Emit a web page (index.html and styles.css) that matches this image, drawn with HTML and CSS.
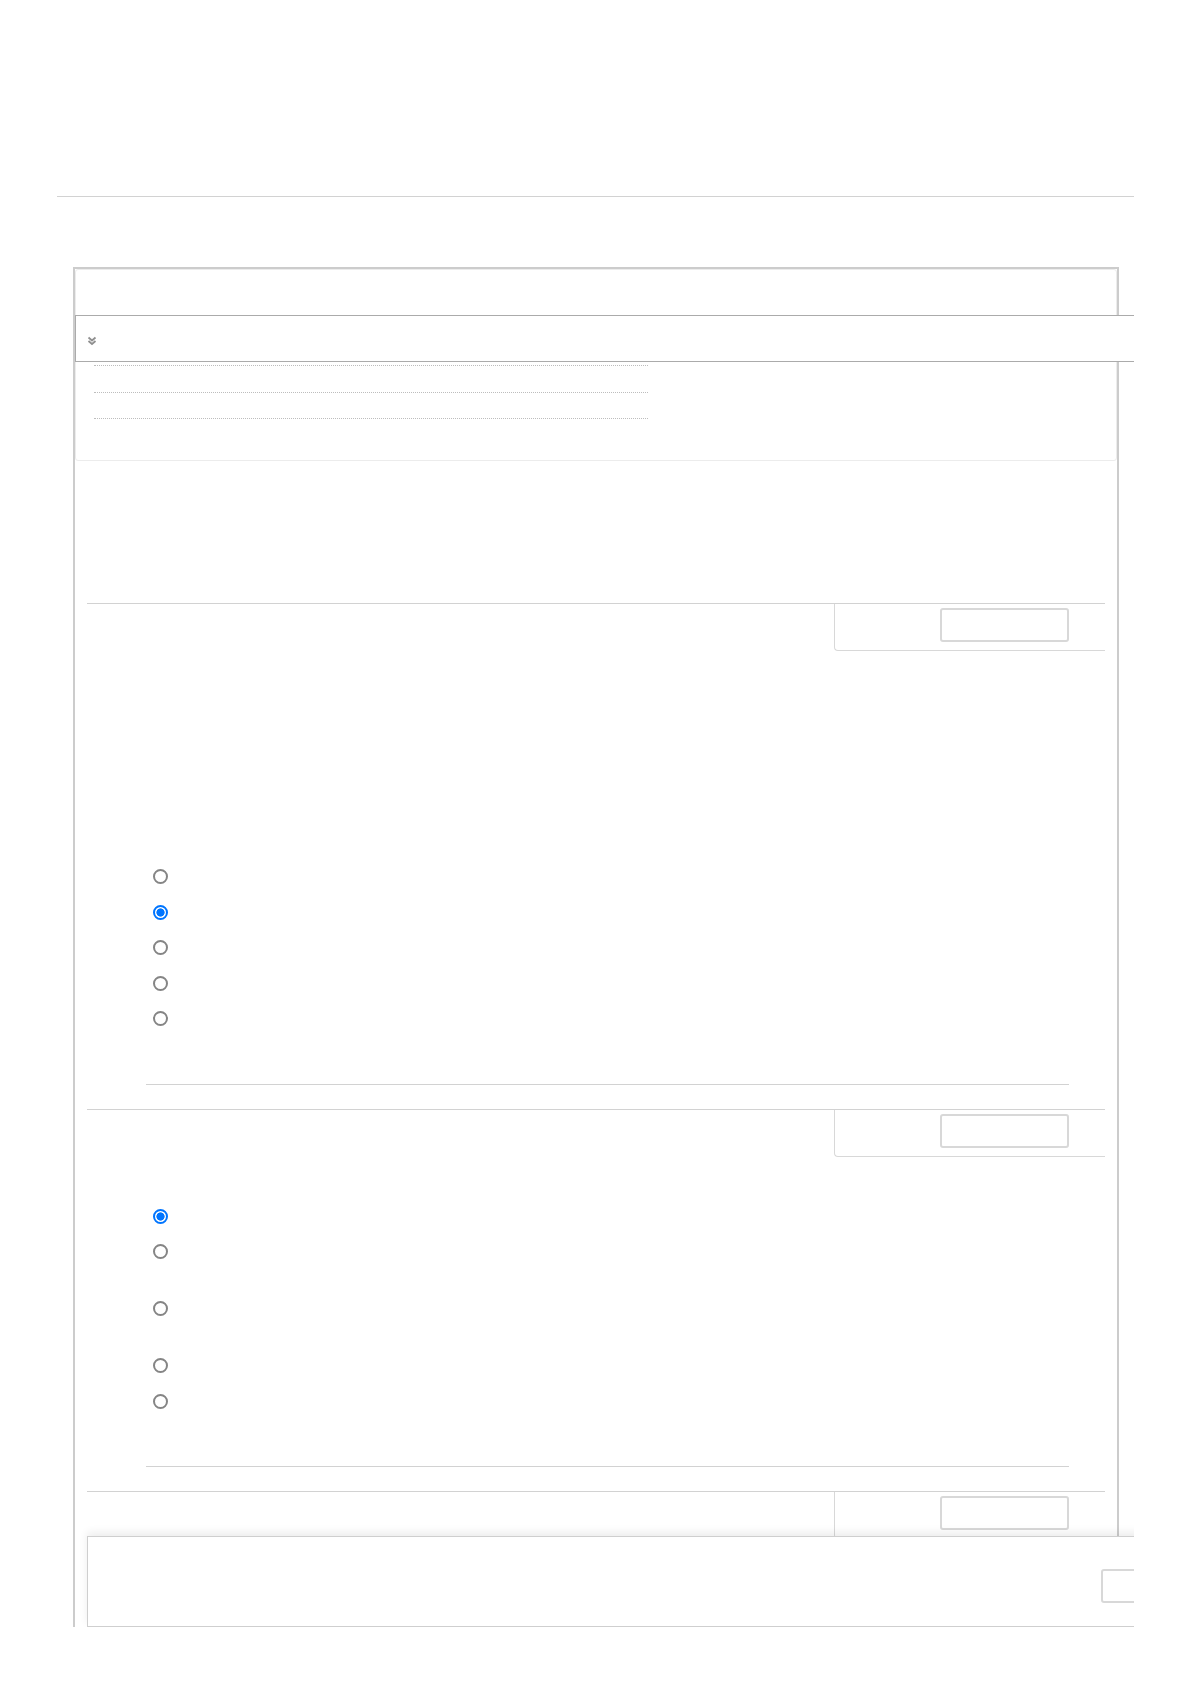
FILE: index.html
```html
<!DOCTYPE html>
<html lang="en">
<head>
<meta charset="utf-8">
<title>Quiz</title>
<link rel="stylesheet" href="styles.css">
</head>
<body>
<div class="page">
  <div class="masthead"></div>
  <div class="rule"></div>

  <div class="frame">
    <div class="panel">
      <div class="panel-top"></div>
      <div class="toggle-bar">
        <svg class="chev" width="10" height="10" viewBox="0 0 10 10" aria-hidden="true">
          <polyline points="1.5,1.5 5,4.5 8.5,1.5" fill="none" stroke="#8f8f8f" stroke-width="1.8"/>
          <polyline points="1.5,5 5,8 8.5,5" fill="none" stroke="#8f8f8f" stroke-width="1.8"/>
        </svg>
      </div>
      <ul class="index">
        <li></li>
        <li></li>
        <li></li>
      </ul>
    </div>

    <div class="quiz">
      <section class="question">
        <div class="q-head">
          <div class="q-info"><span class="q-btn"></span></div>
        </div>
        <div class="q-body q-body-tall"></div>
        <div class="options">
          <label class="opt"><input type="radio" name="q1"></label>
          <label class="opt"><input type="radio" name="q1" checked></label>
          <label class="opt"><input type="radio" name="q1"></label>
          <label class="opt"><input type="radio" name="q1"></label>
          <label class="opt"><input type="radio" name="q1"></label>
        </div>
        <div class="q-sep"></div>
      </section>

      <section class="question">
        <div class="q-head">
          <div class="q-info"><span class="q-btn"></span></div>
        </div>
        <div class="q-body"></div>
        <div class="options">
          <label class="opt"><input type="radio" name="q2" checked></label>
          <label class="opt tall"><input type="radio" name="q2"></label>
          <label class="opt tall"><input type="radio" name="q2"></label>
          <label class="opt"><input type="radio" name="q2"></label>
          <label class="opt"><input type="radio" name="q2"></label>
        </div>
        <div class="q-sep"></div>
      </section>

      <section class="question">
        <div class="q-head">
          <div class="q-info"><span class="q-btn"></span></div>
        </div>
        <div class="q-body"></div>
      </section>
    </div>
  </div>

  <div class="footer-bar">
    <span class="footer-btn"></span>
  </div>
</div>
</body>
</html>
```

FILE: styles.css
```css
html, body {
  margin: 0;
  padding: 0;
  background: #ffffff;
  font-family: "Liberation Sans", Arial, sans-serif;
  color: #222;
}

.page {
  position: relative;
  margin-left: 57px;
  width: 1077px;
  height: 1627px;
  overflow: hidden;
}

.masthead {
  height: 196px;
}

.rule {
  height: 1px;
  background: #d2d2d2;
}

.frame {
  margin-top: 70px;
  margin-left: 16px;
  width: 1042px;
  height: 1400px;
  border: 2px solid #cccccc;
  border-bottom: none;
}

.panel {
  box-sizing: border-box;
  height: 192px;
  border: 1px solid #ececec;
  border-radius: 3px;
}

.panel-top {
  height: 45px;
}

.toggle-bar {
  box-sizing: border-box;
  margin-left: -1px;
  width: 1075px;
  height: 47px;
  border: 1px solid #ababab;
  background: #ffffff;
  display: flex;
  align-items: center;
  padding-left: 11px;
  padding-top: 5px;
}

.chev {
  display: block;
}

.index {
  list-style: none;
  margin: 3px 0 0 18px;
  padding: 0;
  width: 554px;
}

.index li {
  height: 26.5px;
  border-top: 1px dotted #bdbdbd;
  box-sizing: border-box;
}

.quiz {
  margin-top: 142px;
  padding: 0 12px;
}

.q-head {
  border-top: 1px solid #d2d2d2;
  display: flex;
  justify-content: flex-end;
}

.q-info {
  box-sizing: border-box;
  width: 271px;
  height: 47px;
  border-left: 1px solid #d8d8d8;
  border-bottom: 1px solid #d8d8d8;
  border-bottom-left-radius: 4px;
  padding: 4px 0 0 105px;
}

.q-btn {
  display: block;
  box-sizing: border-box;
  width: 129px;
  height: 34px;
  border: 2px solid #d8d8d8;
  border-radius: 3px;
  background: #ffffff;
}

.q-body {
  height: 41px;
}

.q-body-tall {
  height: 207px;
}

.options {
  display: flex;
  flex-direction: column;
  padding-left: 66px;
}

.opt {
  display: flex;
  align-items: flex-start;
  height: 35.5px;
}

.opt.tall {
  height: 57px;
}

.opt input {
  appearance: none;
  -webkit-appearance: none;
  box-sizing: border-box;
  width: 15px;
  height: 15px;
  margin: 11px 0 0 0;
  border: 2px solid #858585;
  border-radius: 50%;
  background: #ffffff;
}

.opt input:checked {
  border-color: #0075ff;
  background: radial-gradient(circle, #0075ff 0 3.8px, #ffffff 4.4px);
}

.q-sep {
  margin: 48px 36px 24px 59px;
  height: 1px;
  background: #d2d2d2;
}

.footer-bar {
  position: absolute;
  left: 30px;
  right: -30px;
  bottom: 0;
  box-sizing: border-box;
  height: 91px;
  border: 1px solid #cfcfcf;
  background: #ffffff;
  box-shadow: 0 -4px 8px rgba(0, 0, 0, 0.07);
  padding: 32px 0 0 1013px;
}

.footer-btn {
  display: block;
  box-sizing: border-box;
  width: 120px;
  height: 34px;
  border: 2px solid #d8d8d8;
  border-radius: 3px;
}
```
